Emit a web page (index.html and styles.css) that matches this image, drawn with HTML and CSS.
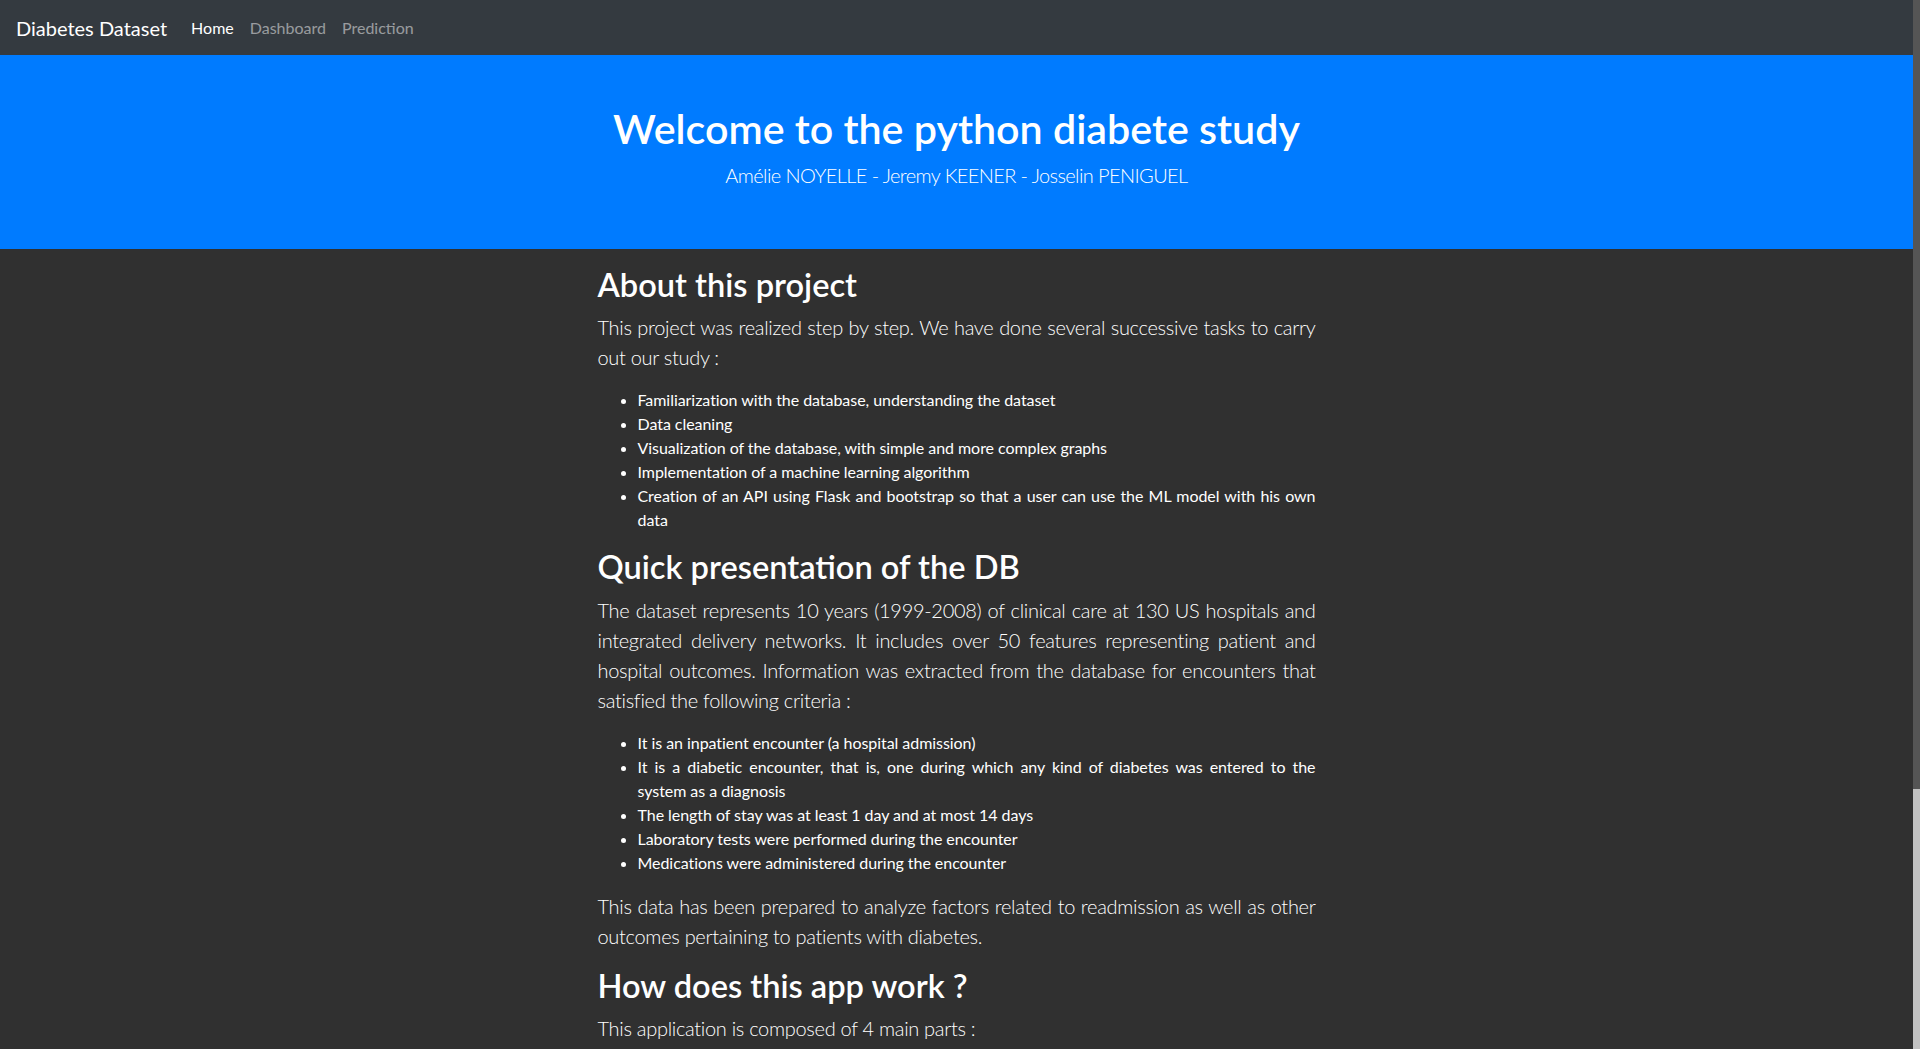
FILE: index.html
```html
<!DOCTYPE html>
<html lang="en">
<head>
<meta charset="utf-8">
<title>Diabetes Dataset</title>
<link rel="stylesheet" href="styles.css">
</head>
<body>
<div class="page">
  <nav class="navbar">
    <a class="brand" href="#">Diabetes Dataset</a>
    <ul class="nav">
      <li><a class="nav-link active" href="#">Home</a></li>
      <li><a class="nav-link" href="#">Dashboard</a></li>
      <li><a class="nav-link" href="#">Prediction</a></li>
    </ul>
  </nav>

  <header class="jumbotron">
    <h1 class="title">Welcome to the python diabete study</h1>
    <p class="authors">Amélie NOYELLE - Jeremy KEENER - Josselin PENIGUEL</p>
  </header>

  <main class="content">
    <h2>About this project</h2>
    <p class="lead">This project was realized step by step. We have done several successive tasks to carry out our study :</p>
    <ul class="items">
      <li>Familiarization with the database, understanding the dataset</li>
      <li>Data cleaning</li>
      <li>Visualization of the database, with simple and more complex graphs</li>
      <li>Implementation of a machine learning algorithm</li>
      <li>Creation of an API using Flask and bootstrap so that a user can use the ML model with his own data</li>
    </ul>

    <h2>Quick presentation of the DB</h2>
    <p class="lead">The dataset represents 10 years (1999-2008) of clinical care at 130 US hospitals and integrated delivery networks. It includes over 50 features representing patient and hospital outcomes. Information was extracted from the database for encounters that satisfied the following criteria :</p>
    <ul class="items">
      <li>It is an inpatient encounter (a hospital admission)</li>
      <li>It is a diabetic encounter, that is, one during which any kind of diabetes was entered to the system as a diagnosis</li>
      <li>The length of stay was at least 1 day and at most 14 days</li>
      <li>Laboratory tests were performed during the encounter</li>
      <li>Medications were administered during the encounter</li>
    </ul>
    <p class="lead">This data has been prepared to analyze factors related to readmission as well as other outcomes pertaining to patients with diabetes.</p>

    <h2>How does this app work ?</h2>
    <p class="lead last">This application is composed of 4 main parts :</p>
  </main>
</div>
<div class="scrollbar" aria-hidden="true">
  <div class="scrollbar-thumb"></div>
  <div class="scrollbar-track"></div>
</div>
</body>
</html>
```
FILE: styles.css
```css
html {
  background: #303030;
  overflow: hidden;
}
body {
  margin: 0;
  height: 1049px;
  overflow: hidden;
  display: flex;
  background: #303030;
  color: #ffffff;
  font-family: "Lato", "Open Sans", sans-serif;
  font-size: 16px;
  line-height: 1.5;
}
a {
  text-decoration: none;
}
.page {
  flex: 1 1 auto;
  min-width: 0;
}

/* fake browser scrollbar */
.scrollbar {
  flex: 0 0 7px;
  height: 1049px;
  display: flex;
  flex-direction: column;
}
.scrollbar-thumb {
  height: 789px;
  background: #555555;
}
.scrollbar-track {
  flex: 1 1 auto;
  background: #c1c1c1;
}

/* navbar */
.navbar {
  height: 55px;
  background: #343a40;
  display: flex;
  align-items: center;
  padding: 0 16px;
}
.brand {
  color: #ffffff;
  font-size: 20px;
  line-height: 30px;
  margin-right: 16px;
  white-space: nowrap;
}
.nav {
  display: flex;
  list-style: none;
  margin: 0;
  padding: 0;
}
.nav-link {
  display: block;
  padding: 8px;
  color: rgba(255, 255, 255, 0.5);
  font-size: 16px;
  line-height: 24px;
}
.nav-link.active {
  color: #ffffff;
}

/* jumbotron */
.jumbotron {
  background: #007bff;
  text-align: center;
  padding: 49px 32px 59px;
}
.title {
  margin: 0 0 8px;
  font-size: 41.2px;
  font-weight: 600;
  line-height: 48px;
}
.authors {
  margin: 0;
  font-size: 20px;
  font-weight: 300;
  line-height: 30px;
  letter-spacing: -0.6px;
}

/* content */
.content {
  max-width: 718px;
  margin: 0 auto;
  padding-top: 17px;
}
h2 {
  margin: 0 0 8px;
  font-size: 32.6px;
  font-weight: 600;
  line-height: 38.4px;
}
.lead {
  margin: 0 0 16px;
  font-size: 20px;
  font-weight: 300;
  line-height: 30px;
  letter-spacing: -0.3px;
  text-align: justify;
}
.lead.last {
  margin-bottom: 0;
}
.items {
  margin: 0 0 16px;
  padding-left: 40px;
  text-align: justify;
  letter-spacing: -0.05px;
}
```
